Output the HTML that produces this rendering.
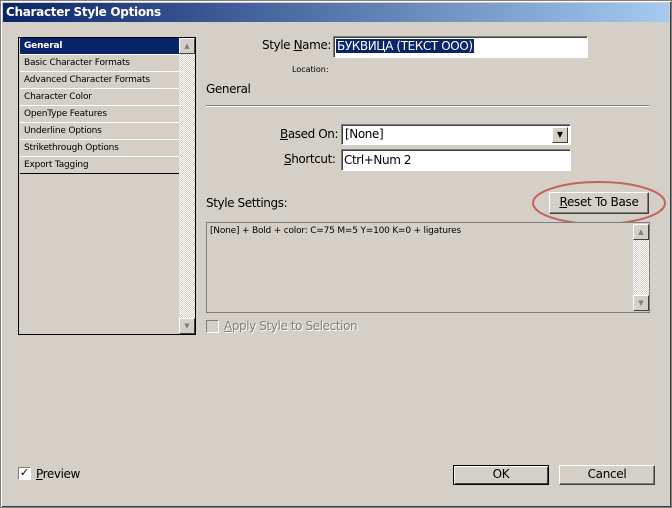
<!DOCTYPE html>
<html><head><meta charset="utf-8"><style>
*{margin:0;padding:0;box-sizing:border-box}
body{width:672px;height:508px;background:#d4d0c8;font-family:Tahoma,"DejaVu Sans","Liberation Sans",sans-serif;position:relative;overflow:hidden;color:#000}
.a{position:absolute}
#win{position:absolute;left:0;top:0;width:672px;height:508px;border:1px solid #808080;box-shadow:inset 1px 1px 0 #fff,inset -1px -1px 0 #404040}
#title{left:3px;top:3px;width:666px;height:19px;background:linear-gradient(90deg,#0a246a,#a6caf0);color:#fff;font-weight:bold;font-size:12px;line-height:19px;padding-left:3px;font-family:"DejaVu Sans",sans-serif;letter-spacing:-.3px}
.lbl{font-size:12px;font-family:"DejaVu Sans",sans-serif;letter-spacing:-.4px}
.in{background:#fff;border:1px solid;border-color:#808080 #fff #fff #808080;box-shadow:inset 1px 1px 0 #404040}
.item{position:absolute;left:1px;width:160px;height:17px;font-size:9px;line-height:16px;padding-left:4px;border-bottom:1px solid #fff;font-family:"DejaVu Sans",sans-serif;letter-spacing:-.2px}
.chk{background:repeating-conic-gradient(#fff 0 25%,#d4d0c8 0 50%) 0 0/2px 2px}
.btn{background:#d4d0c8;border:1px solid;border-color:#fff #404040 #404040 #fff;box-shadow:inset -1px -1px 0 #808080;font-size:12px;text-align:center;font-family:"DejaVu Sans",sans-serif;letter-spacing:-.3px}
.sb{width:16px;height:16px;background:#d4d0c8;border:1px solid;border-color:#fff #404040 #404040 #fff;font-size:7px;color:#808080;text-align:center;line-height:14px}
u{text-decoration:underline}
</style></head><body>
<div id="win"></div>
<div class="a" id="title">Character Style Options</div>

<div class="a" style="left:18px;top:37px;width:178px;height:298px;border:1px solid #000;background:#d4d0c8">
 <div class="item" style="top:0;background:#0a246a;color:#fff;font-weight:bold;height:17px;border-bottom:1px solid #fff">General</div>
 <div class="item" style="top:17px">Basic Character Formats</div>
 <div class="item" style="top:34px">Advanced Character Formats</div>
 <div class="item" style="top:51px">Character Color</div>
 <div class="item" style="top:68px">OpenType Features</div>
 <div class="item" style="top:85px">Underline Options</div>
 <div class="item" style="top:102px">Strikethrough Options</div>
 <div class="item" style="top:119px;border-bottom:1px solid #000">Export Tagging</div>
 <div class="a chk" style="left:160px;top:0;width:16px;height:296px"></div>
 <div class="a sb" style="left:160px;top:0">▲</div>
 <div class="a sb" style="left:160px;top:280px">▼</div>
</div>

<div class="a lbl" style="left:262px;top:38px">Style <u>N</u>ame:</div>
<div class="a in" style="left:333px;top:36px;width:255px;height:22px"><span style="position:absolute;left:2px;top:2px;background:#0a246a;color:#fff;font-size:12px;padding:0 1px;font-family:'DejaVu Sans',sans-serif;letter-spacing:-.4px">БУКВИЦА (ТЕКСТ ООО)</span></div>
<div class="a" style="left:292px;top:65px;font-size:8px;font-family:'DejaVu Sans',sans-serif">Location:</div>
<div class="a lbl" style="left:206px;top:82px">General</div>
<div class="a" style="left:206px;top:105px;width:443px;height:2px;border-top:1px solid #808080;border-bottom:1px solid #fff"></div>

<div class="a lbl" style="left:280px;top:127px"><u>B</u>ased On:</div>
<div class="a in" style="left:341px;top:124px;width:230px;height:21px"><span class="a lbl" style="left:3px;top:2px">[None]</span><div class="a sb" style="left:210px;top:2px;width:16px;height:16px;color:#000;font-size:8px">▼</div></div>
<div class="a lbl" style="left:284px;top:152px"><u>S</u>hortcut:</div>
<div class="a in" style="left:341px;top:149px;width:230px;height:22px"><span class="a lbl" style="left:2px;top:3px">Ctrl+Num 2</span></div>

<div class="a lbl" style="left:206px;top:196px">Style Settings:</div>
<div class="a btn" style="left:549px;top:192px;width:100px;height:22px;line-height:19px"><u>R</u>eset To Base</div>
<svg class="a" style="left:530px;top:178px" width="140" height="50"><ellipse cx="69" cy="25" rx="66" ry="21" fill="none" stroke="#c0504d" stroke-width="2" opacity=".85"/></svg>

<div class="a" style="left:206px;top:222px;width:444px;height:91px;border:1px solid #808080;background:#d4d0c8">
 <div class="a" style="left:3px;top:3px;font-size:9px;font-family:'DejaVu Sans',sans-serif;letter-spacing:-.2px">[None] + Bold + color: C=75 M=5 Y=100 K=0 + ligatures</div>
 <div class="a chk" style="left:426px;top:1px;width:16px;height:87px"></div>
 <div class="a sb" style="left:426px;top:1px">▲</div>
 <div class="a sb" style="left:426px;top:72px">▼</div>
</div>

<div class="a" style="left:206px;top:320px;width:13px;height:13px;border:1px solid;border-color:#808080 #fff #fff #808080"></div>
<div class="a lbl" style="left:224px;top:319px;color:#808080;text-shadow:1px 1px 0 #fff"><u>A</u>pply Style to Selection</div>

<div class="a" style="left:18px;top:467px;width:13px;height:13px;background:#fff;border:1px solid;border-color:#808080 #fff #fff #808080;font-size:11px;line-height:10px;text-align:center;font-weight:bold">✓</div>
<div class="a lbl" style="left:36px;top:467px"><u>P</u>review</div>

<div class="a btn" style="left:453px;top:465px;width:96px;height:20px;line-height:17px;border:1px solid #000;box-shadow:inset 1px 1px 0 #fff,inset -1px -1px 0 #404040">OK</div>
<div class="a btn" style="left:559px;top:465px;width:96px;height:20px;line-height:17px">Cancel</div>
</body></html>
